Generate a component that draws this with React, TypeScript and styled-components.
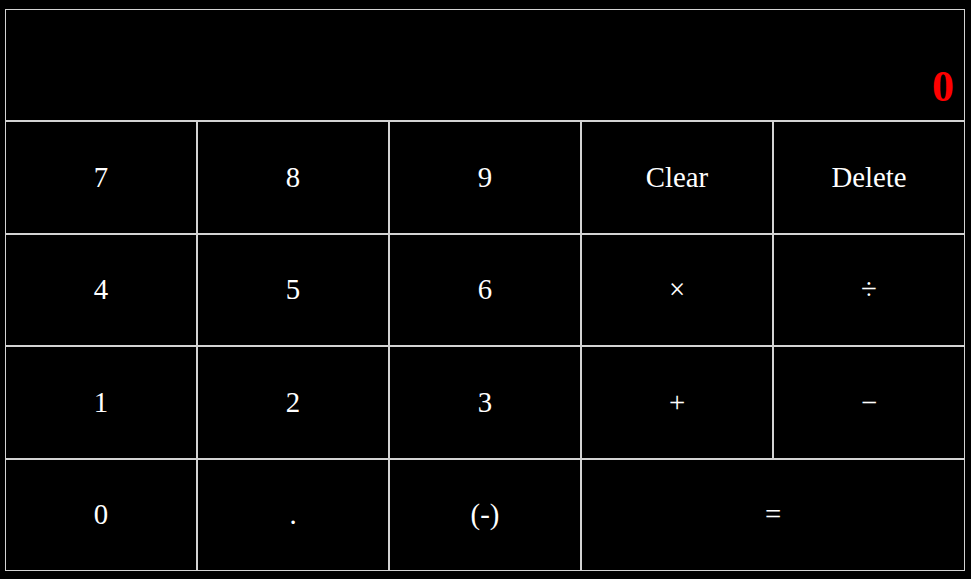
import React from 'react';
import styled, { createGlobalStyle } from 'styled-components';

const GlobalStyle = createGlobalStyle`
  html, body {
    margin: 0;
    padding: 0;
    background: #000;
  }
  body {
    font-family: "Liberation Serif", "Times New Roman", serif;
  }
`;

const Calculator = styled.div`
  margin: 9px 0 0 5px;
  width: 960px;
  height: 562px;
  display: grid;
  grid-template-columns: repeat(5, 1fr);
  grid-template-rows: repeat(5, 1fr);
`;

const Display = styled.div`
  grid-column: span 5;
  border: 1px solid #d3d3d3;
  display: flex;
  align-items: flex-end;
  justify-content: flex-end;
  padding: 0 10px 8px 0;
  color: #ff0000;
  font-size: 44px;
  font-weight: 700;
`;

const Key = styled.button<{ $span?: number }>`
  grid-column: span ${(p) => p.$span ?? 1};
  background: #000;
  color: #fff;
  border: 1px solid #d3d3d3;
  border-radius: 0;
  margin: 0;
  padding: 0;
  font-family: "Liberation Serif", "Times New Roman", serif;
  font-size: 28.8px;
  cursor: pointer;
`;

const keys: { label: string; span?: number }[] = [
  { label: '7' }, { label: '8' }, { label: '9' }, { label: 'Clear' }, { label: 'Delete' },
  { label: '4' }, { label: '5' }, { label: '6' }, { label: '×' }, { label: '÷' },
  { label: '1' }, { label: '2' }, { label: '3' }, { label: '+' }, { label: '−' },
  { label: '0' }, { label: '.' }, { label: '(-)' }, { label: '=', span: 2 },
];

const App: React.FC = () => {
  return (
    <>
      <GlobalStyle />
      <Calculator>
        <Display>0</Display>
        {keys.map((k) => (
          <Key key={k.label} $span={k.span}>
            {k.label}
          </Key>
        ))}
      </Calculator>
    </>
  );
};

export default App;
